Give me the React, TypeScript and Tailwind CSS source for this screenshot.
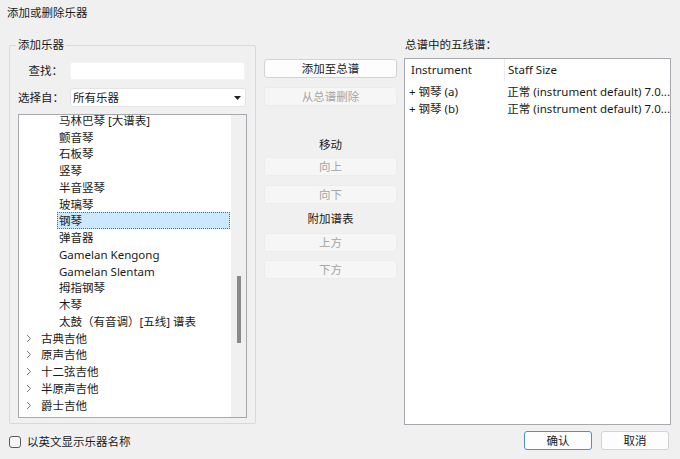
import React from "react";

const FONT = { fontFamily: '"Noto Sans", "Noto Sans CJK SC", sans-serif' };

const children = [
  "马林巴琴 [大谱表]",
  "颤音琴",
  "石板琴",
  "竖琴",
  "半音竖琴",
  "玻璃琴",
  "钢琴",
  "弹音器",
  "Gamelan Kengong",
  "Gamelan Slentam",
  "拇指钢琴",
  "木琴",
  "太鼓（有音调）[五线] 谱表",
];
const groups = ["古典吉他", "原声吉他", "十二弦吉他", "半原声吉他", "爵士吉他"];

function Chevron() {
  return (
    <svg width="6" height="9" viewBox="0 0 6 9" className="shrink-0">
      <polyline points="1,1 4.5,4.5 1,8" fill="none" stroke="#7a7a7a" strokeWidth="1" />
    </svg>
  );
}

function Btn({ label, enabled = false, focus = false, w = "w-[133px]" }: { label: string; enabled?: boolean; focus?: boolean; w?: string }) {
  const cls = enabled
    ? "bg-[#fdfdfd] border-[#d3d3d3] text-[#1a1a1a]"
    : "bg-[#f6f6f6] border-[#ececec] text-[#a5a5a5]";
  return (
    <div
      className={`${w} h-[19px] shrink-0 flex items-center justify-center whitespace-nowrap rounded-[3px] border ${focus ? "border-[#4a90d9] bg-[#fdfdfd] text-[#1a1a1a]" : cls}`}
    >
      {label}
    </div>
  );
}

export default function App() {
  return (
    <div style={FONT} className="w-[680px] h-[459px] bg-[#f0f0f0] text-[11.5px] text-[#1a1a1a] flex flex-col overflow-hidden whitespace-nowrap">
      <div className="h-[25px] pl-[7px] flex items-center">添加或删除乐器</div>
      <div className="h-[403px] flex items-start pl-[9px]">
        {/* left group */}
        <div className="relative mt-[20px] w-[247px] h-[379px] shrink-0 border border-[#d9d9d9] rounded-[2px] flex flex-col pl-[8px] pr-[8px]">
          <span className="absolute -top-[9px] left-[6px] px-[2px] bg-[#f0f0f0] leading-[16px]">添加乐器</span>
          <div className="mt-[16px] h-[18px] flex items-center">
            <div className="w-[52px] pr-[7px] text-right">查找：</div>
            <div className="w-[175px] h-[18px] bg-white border border-[#f3f3f3] rounded-[2px]" />
          </div>
          <div className="mt-[8px] h-[19px] flex items-center">
            <div className="w-[52px] pr-[7px] text-right">选择自：</div>
            <div className="w-[176px] h-[19px] bg-white border border-[#e4e4e4] rounded-[3px] flex items-center pl-[2px] pr-[4px]">
              <span className="flex-1">所有乐器</span>
              <svg width="7" height="4" viewBox="0 0 7 4">
                <polygon points="0,0 7,0 3.5,4" fill="#222" />
              </svg>
            </div>
          </div>
          <div className="mt-[7px] w-[229px] h-[304px] bg-white border border-[#a7a7ae] flex overflow-hidden">
            <div className="flex-1 flex flex-col -mt-[3px]">
              {children.map((c) => (
                <div key={c} className="h-[16.75px] shrink-0 flex items-center pl-[40px]">
                  {c === "钢琴" ? (
                    <div className="w-[173px] h-[17px] -ml-[2px] pl-[1px] flex items-center bg-[#cce8ff] border border-dotted border-[#3d6fa3]">
                      钢琴
                    </div>
                  ) : (
                    <span>{c}</span>
                  )}
                </div>
              ))}
              {groups.map((g) => (
                <div key={g} className="h-[16.75px] shrink-0 flex items-center pl-[7px] gap-[9px]">
                  <Chevron />
                  <span>{g}</span>
                </div>
              ))}
            </div>
            <div className="w-[15px] bg-[#f0f0f0] flex justify-center">
              <div className="mt-[161px] w-[4px] h-[67px] bg-[#8a8a8a]" />
            </div>
          </div>
        </div>
        {/* middle */}
        <div className="ml-[8px] mt-[34px] w-[133px] shrink-0 flex flex-col items-center">
          <Btn label="添加至总谱" enabled />
          <div className="h-[9px]" />
          <Btn label="从总谱删除" />
          <div className="h-[46px] flex items-end leading-[14px]">移动</div>
          <div className="h-[5px]" />
          <Btn label="向上" />
          <div className="h-[9px]" />
          <Btn label="向下" />
          <div className="h-[29px] flex items-center">附加谱表</div>
          <Btn label="上方" />
          <div className="h-[8px]" />
          <Btn label="下方" />
        </div>
        {/* right */}
        <div className="ml-[7px] mt-[13px] flex flex-col">
          <div className="h-[14px] leading-[14px] pl-[1px]">总谱中的五线谱：</div>
          <div className="mt-[6px] w-[267px] h-[367px] bg-white border border-[#a7a7ae] flex flex-col">
            <div className="h-[22px] flex items-center">
              <div className="w-[100px] pl-[6px] h-full flex items-center border-r border-[#ececec]">Instrument</div>
              <div className="pl-[3px]">Staff Size</div>
            </div>
            <div className="h-[17px] mt-[2px] flex items-center">
              <div className="w-[100px] pl-[4px]">+ 钢琴 (a)</div>
              <div className="pl-[3px]">正常 (instrument default) 7.0...</div>
            </div>
            <div className="h-[17px] flex items-center">
              <div className="w-[100px] pl-[4px]">+ 钢琴 (b)</div>
              <div className="pl-[3px]">正常 (instrument default) 7.0...</div>
            </div>
          </div>
        </div>
      </div>
      {/* bottom */}
      <div className="h-[31px] flex items-start pl-[9px] pr-[11px]">
        <div className="mt-[5px] flex items-center gap-[6px]">
          <div className="w-[12px] h-[12px] border border-[#5a5a5a] rounded-[3px] bg-[#f7f7f7]" />
          <span>以英文显示乐器名称</span>
        </div>
        <div className="flex-1" />
        <div className="mt-[3px] flex gap-[9px]">
          <Btn label="确认" focus w="w-[68px]" />
          <Btn label="取消" enabled w="w-[68px]" />
        </div>
      </div>
    </div>
  );
}
